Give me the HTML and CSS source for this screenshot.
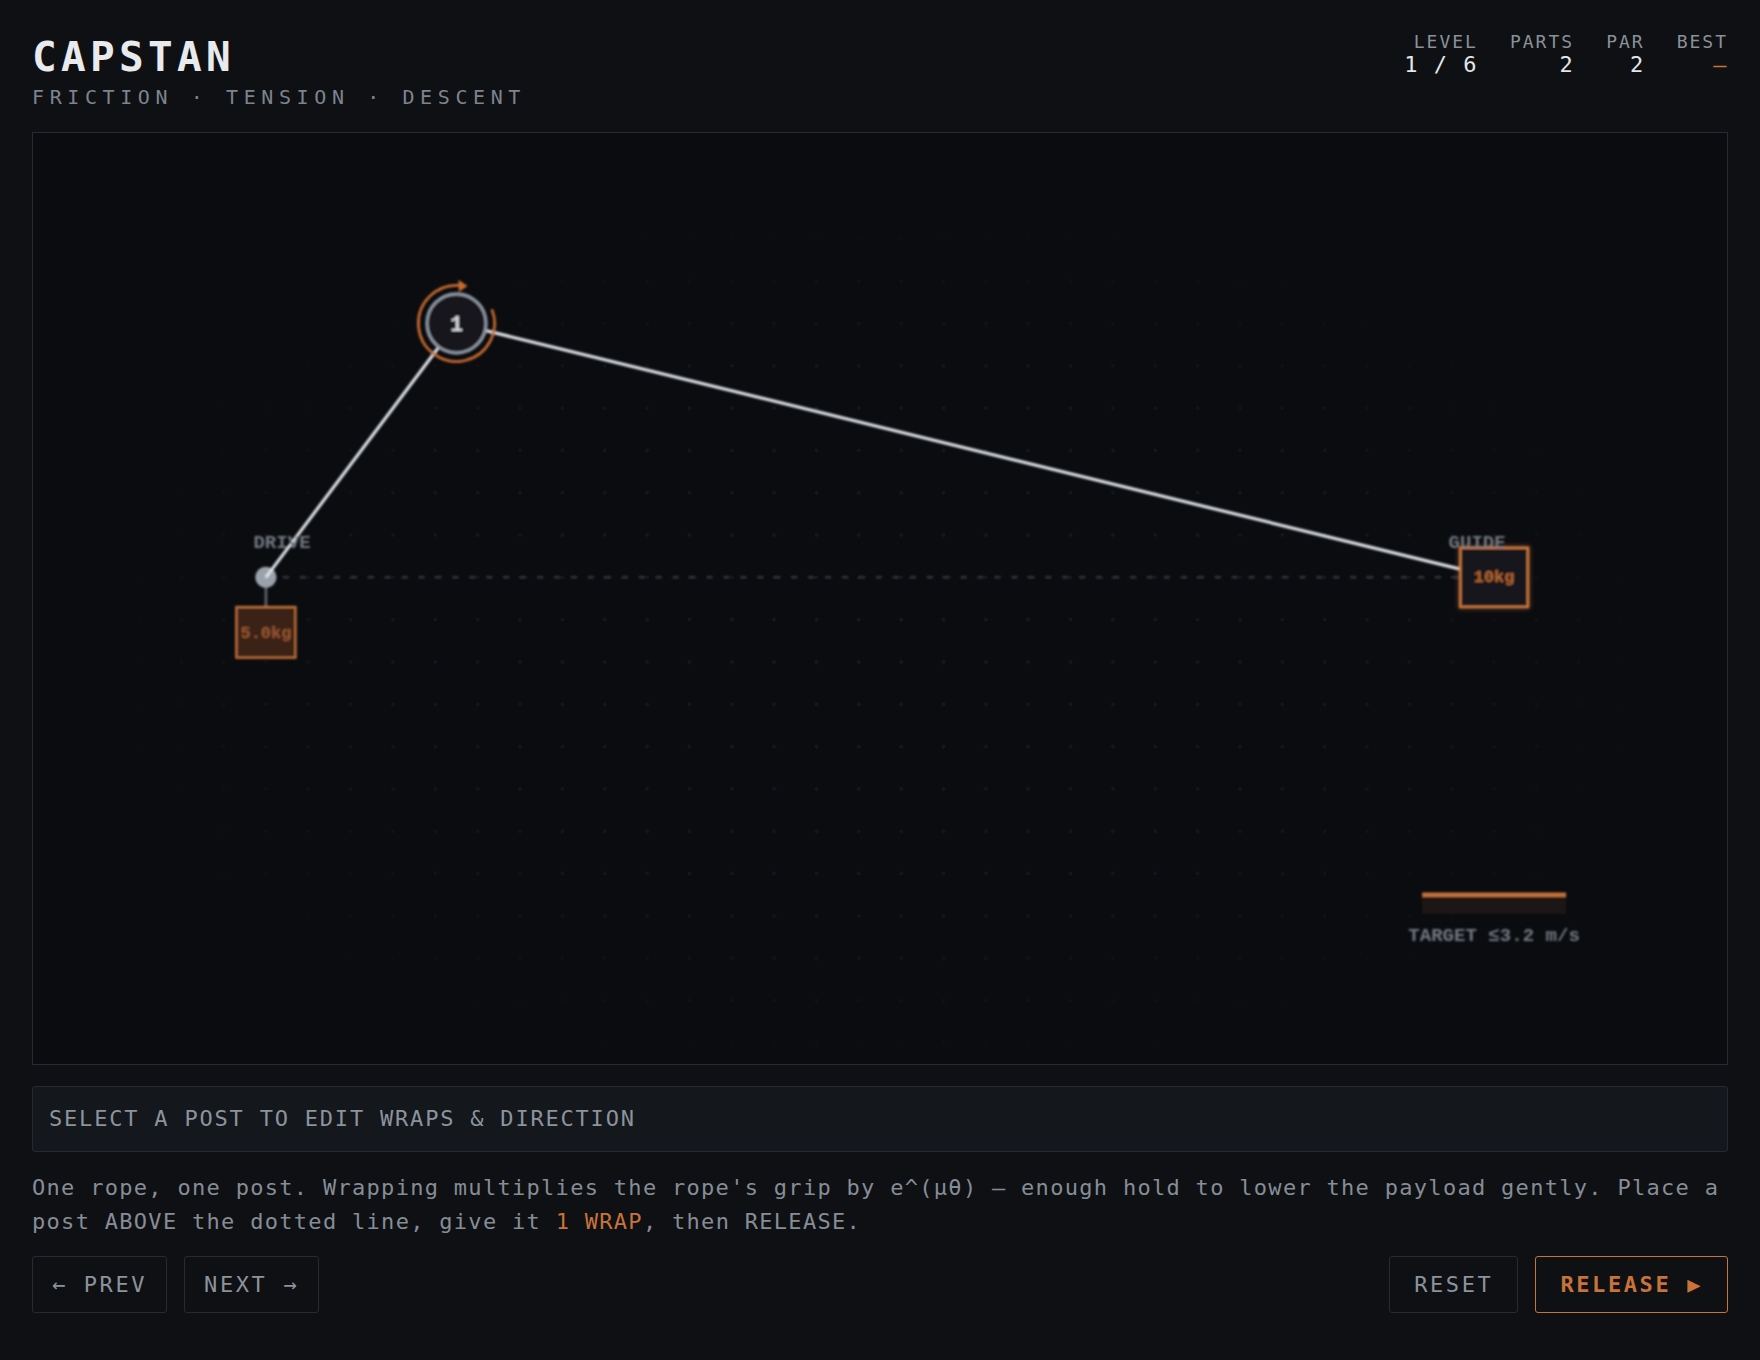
FILE: index.html
```html
<!DOCTYPE html>
<html lang="en">
<head>
  <meta charset="UTF-8">
  <title>Capstan</title>
  <link rel="stylesheet" href="styles.css">
</head>
<body>

  <header class="top">
    <div class="brand">
      <h1 class="title">CAPSTAN</h1>
      <div class="subtitle">FRICTION · TENSION · DESCENT</div>
    </div>
    <div class="stats">
      <div class="stat">
        <div class="stat-label">LEVEL</div>
        <div class="stat-value">1 / 6</div>
      </div>
      <div class="stat">
        <div class="stat-label">PARTS</div>
        <div class="stat-value">2</div>
      </div>
      <div class="stat">
        <div class="stat-label">PAR</div>
        <div class="stat-value">2</div>
      </div>
      <div class="stat">
        <div class="stat-label">BEST</div>
        <div class="stat-value none">—</div>
      </div>
    </div>
  </header>

  <div class="board">
    <svg viewBox="0 0 800 440" preserveAspectRatio="none">
      <defs>
        <pattern id="grid" width="20" height="20" patternUnits="userSpaceOnUse">
          <circle cx="10" cy="10" r="0.9" fill="#16191f"/>
        </pattern>
        <!-- grid fades out toward the edges -->
        <radialGradient id="fade" cx="0.5" cy="0.55" r="0.5">
          <stop offset="0" stop-color="#fff"/>
          <stop offset="0.55" stop-color="#fff" stop-opacity="0.8"/>
          <stop offset="1" stop-color="#fff" stop-opacity="0"/>
        </radialGradient>
        <mask id="grid-mask">
          <rect width="800" height="440" fill="url(#fade)"/>
        </mask>
        <filter id="soft" x="-5%" y="-5%" width="110%" height="110%">
          <feGaussianBlur stdDeviation="0.4"/>
        </filter>
        <filter id="glow" x="-30%" y="-30%" width="160%" height="160%">
          <feGaussianBlur stdDeviation="1.2"/>
        </filter>
      </defs>

      <rect width="800" height="440" fill="url(#grid)" mask="url(#grid-mask)"/>

      <g filter="url(#soft)">
        <!-- datum line between drive and guide -->
        <line x1="110" y1="210" x2="674" y2="210" class="datum"/>

        <!-- drive counterweight -->
        <line x1="110" y1="215" x2="110" y2="224" class="stem"/>
        <rect x="96" y="224" width="28" height="24" class="weight"/>
        <text x="110" y="238.5" class="kg dim">5.0kg</text>
        <circle cx="110" cy="210" r="5" class="anchor"/>

        <!-- rope -->
        <polyline points="110,210 200,90 690,210" class="rope"/>

        <!-- post #1 -->
        <circle cx="200" cy="90" r="14" class="post"/>
        <text x="200" y="93.5" class="post-num">1</text>
        <path d="M216.69 83.26 A18 18 0 1 1 201.26 72.04" class="wrap"/>
        <path d="M205.2 72.3 L200.9 69.4 L201.1 75.1 Z" class="wrap-head"/>

        <!-- payload on the guide -->
        <rect x="674" y="196" width="32" height="28" class="payload-glow" filter="url(#glow)"/>
        <rect x="674" y="196" width="32" height="28" class="payload"/>
        <text x="690" y="212.4" class="kg">10kg</text>

        <text x="117.6" y="196" class="tag">DRIVE</text>
        <text x="682" y="196" class="tag">GUIDE</text>

        <!-- landing pad -->
        <rect x="656" y="359" width="68" height="10" class="pad"/>
        <rect x="656" y="359" width="68" height="2" class="pad-top"/>
        <text x="690" y="382" class="tag">TARGET ≤3.2 m/s</text>
      </g>
    </svg>
  </div>

  <div class="status">SELECT A POST TO EDIT WRAPS &amp; DIRECTION</div>

  <p class="hint">One rope, one post. Wrapping multiplies the rope's grip by e^(μθ) — enough hold to lower the payload gently. Place a post ABOVE the dotted line, give it <span class="key">1 WRAP</span>, then RELEASE.</p>

  <div class="controls">
    <div class="group">
      <button class="btn">← PREV</button>
      <button class="btn">NEXT →</button>
    </div>
    <div class="group">
      <button class="btn act">RESET</button>
      <button class="btn act go">RELEASE ▶</button>
    </div>
  </div>

</body>
</html>
```

FILE: styles.css
```css
* {
  box-sizing: border-box;
  margin: 0;
  padding: 0;
}

body {
  background: #0e1014;
  color: #8b929b;
  font-family: "DejaVu Sans Mono", monospace;
  padding: 32px;
}

.top {
  display: flex;
  justify-content: space-between;
  align-items: flex-start;
  margin-bottom: 23px;
}

.title {
  font-size: 41px;
  line-height: 46px;
  font-weight: bold;
  letter-spacing: 4.3px;
  color: #e8eaed;
  margin-top: 2px;
}

.subtitle {
  font-size: 20px;
  line-height: 24px;
  letter-spacing: 5.6px;
  color: #7d848d;
  margin-top: 5px;
}

.stats {
  display: flex;
  gap: 32px;
  text-align: right;
}

.stat-label {
  font-size: 18px;
  line-height: 20px;
  letter-spacing: 2px;
  color: #8a9199;
}

.stat-value {
  font-size: 22px;
  line-height: 24px;
  letter-spacing: 1.5px;
  color: #e4e7ea;
  margin-top: 1px;
}

.stat-value.none {
  color: #c8733a;
}

.board {
  border: 1px solid #262b32;
  background: #0a0c10;
}

.board svg {
  display: block;
  width: 100%;
  height: 931px;
}

/* board drawing */
.datum {
  stroke: #30353c;
  stroke-width: 1.2;
  stroke-dasharray: 3 5;
}

.stem {
  stroke: #5f6770;
  stroke-width: 1.2;
}

.weight {
  fill: #3a2417;
  stroke: #c8733a;
  stroke-width: 1;
}

.anchor {
  fill: #9aa3ac;
}

.rope {
  fill: none;
  stroke: #dde1e5;
  stroke-width: 1.5;
  stroke-linejoin: round;
}

.post {
  fill: #13161b;
  stroke: #8d96a0;
  stroke-width: 1.5;
}

.post-num {
  font-family: "Liberation Mono", monospace;
  font-weight: bold;
  font-size: 10px;
  text-anchor: middle;
  fill: #d5d9de;
}

.wrap {
  fill: none;
  stroke: #c8692e;
  stroke-width: 1.3;
}

.wrap-head {
  fill: #c8692e;
}

.payload {
  fill: #14171c;
  stroke: #d27a3e;
  stroke-width: 1.2;
}

.payload-glow {
  fill: none;
  stroke: #d27a3e;
  stroke-width: 1.5;
  opacity: 0.5;
}

.kg {
  font-family: "Liberation Mono", monospace;
  font-weight: bold;
  font-size: 8px;
  text-anchor: middle;
  fill: #b8672f;
}

.kg.dim {
  fill: #9a5730;
}

.tag {
  font-family: "Liberation Mono", monospace;
  font-weight: bold;
  font-size: 9px;
  text-anchor: middle;
  fill: #737981;
}

.pad {
  fill: #1f1612;
}

.pad-top {
  fill: #c8733a;
}

.status {
  margin-top: 21px;
  background: #14171c;
  border: 1px solid #262b31;
  border-radius: 3px;
  padding: 20px 16px;
  font-size: 22px;
  line-height: 24px;
  letter-spacing: 1.8px;
  color: #8c939c;
}

.hint {
  margin-top: 19px;
  font-size: 22px;
  line-height: 34px;
  letter-spacing: 1.3px;
  color: #868d96;
}

.hint .key {
  color: #c8733a;
}

.controls {
  display: flex;
  justify-content: space-between;
  margin-top: 17px;
}

.group {
  display: flex;
  gap: 17px;
}

.btn {
  background: transparent;
  border: 1px solid #262b31;
  border-radius: 3px;
  padding: 15px 19px;
  font-family: "DejaVu Sans Mono", monospace;
  font-size: 22px;
  line-height: 25px;
  letter-spacing: 2.6px;
  color: #8c939c;
  cursor: pointer;
}

.btn.act {
  padding: 15px 24px;
}

.btn.go {
  border-color: #c8733a;
  color: #c8733a;
  font-weight: bold;
}
```
